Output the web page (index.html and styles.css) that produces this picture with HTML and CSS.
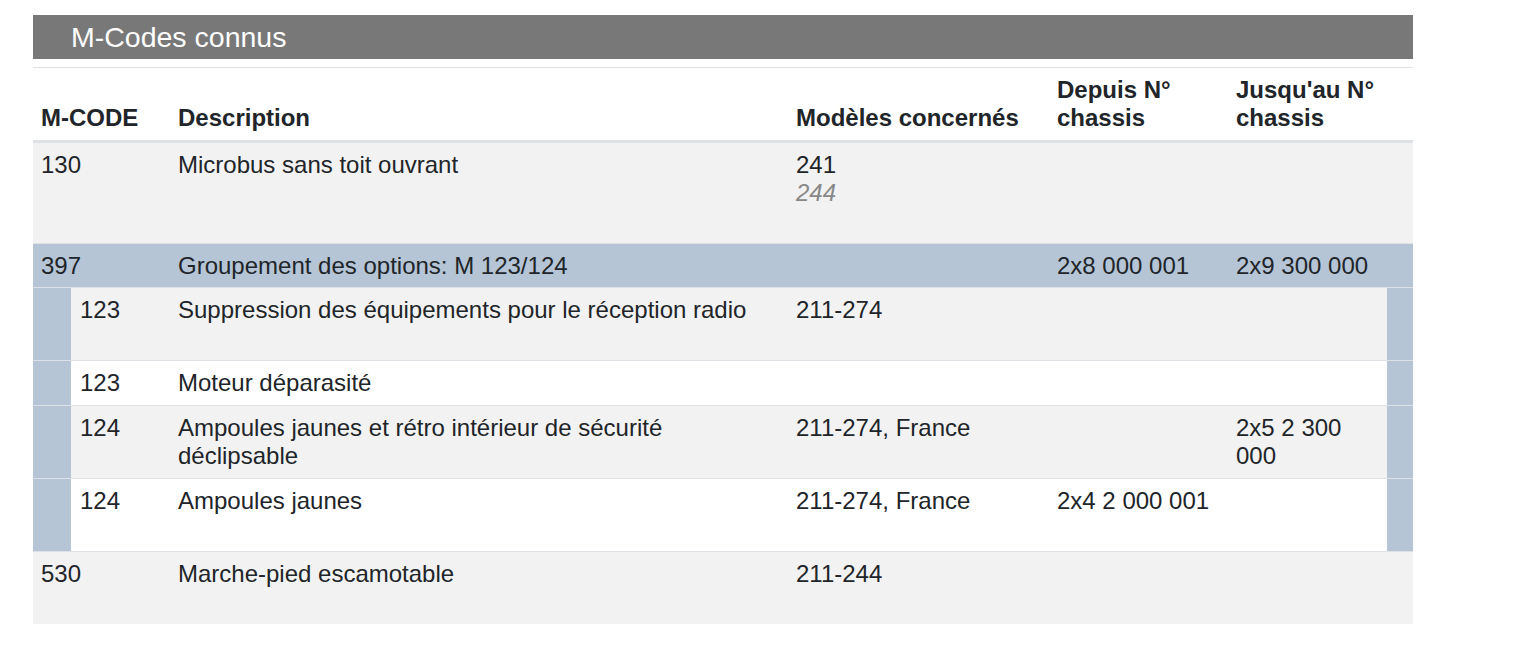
FILE: index.html
```html
<!DOCTYPE html>
<html lang="fr">
<head>
<meta charset="utf-8">
<title>M-Codes connus</title>
<link rel="stylesheet" href="styles.css">
</head>
<body>
<div class="page">
  <h2 class="title">M-Codes connus</h2>
  <div class="table">
    <div class="row head">
      <div class="cell code">M-CODE</div>
      <div class="cell">Description</div>
      <div class="cell">Modèles concernés</div>
      <div class="cell">Depuis N° chassis</div>
      <div class="cell last">Jusqu'au N° chassis</div>
    </div>
    <div class="row stripe">
      <div class="cell code">130</div>
      <div class="cell">Microbus sans toit ouvrant</div>
      <div class="cell models"><div>241</div><div class="alt">244</div></div>
      <div class="cell"></div>
      <div class="cell last"></div>
    </div>
    <div class="row group">
      <div class="cell code">397</div>
      <div class="cell">Groupement des options: M 123/124</div>
      <div class="cell"></div>
      <div class="cell">2x8 000 001</div>
      <div class="cell last">2x9 300 000</div>
    </div>
    <div class="row sub stripe">
      <div class="strip"></div>
      <div class="cell subcode">123</div>
      <div class="cell">Suppression des équipements pour le réception radio</div>
      <div class="cell models"><div>211-274</div></div>
      <div class="cell"></div>
      <div class="cell"></div>
      <div class="strip"></div>
    </div>
    <div class="row sub">
      <div class="strip"></div>
      <div class="cell subcode">123</div>
      <div class="cell">Moteur déparasité</div>
      <div class="cell"></div>
      <div class="cell"></div>
      <div class="cell"></div>
      <div class="strip"></div>
    </div>
    <div class="row sub stripe">
      <div class="strip"></div>
      <div class="cell subcode">124</div>
      <div class="cell">Ampoules jaunes et rétro intérieur de sécurité déclipsable</div>
      <div class="cell"><div>211-274, France</div></div>
      <div class="cell"></div>
      <div class="cell">2x5 2 300 000</div>
      <div class="strip"></div>
    </div>
    <div class="row sub">
      <div class="strip"></div>
      <div class="cell subcode">124</div>
      <div class="cell">Ampoules jaunes</div>
      <div class="cell models"><div>211-274, France</div></div>
      <div class="cell">2x4 2 000 001</div>
      <div class="cell"></div>
      <div class="strip"></div>
    </div>
    <div class="row stripe">
      <div class="cell code">530</div>
      <div class="cell">Marche-pied escamotable</div>
      <div class="cell models"><div>211-244</div></div>
      <div class="cell"></div>
      <div class="cell last"></div>
    </div>
  </div>
</div>
</body>
</html>
```
FILE: styles.css
```css
html, body {
  margin: 0;
  padding: 0;
  background: #fff;
}
body {
  font-family: "Liberation Sans", Arial, sans-serif;
  color: #212529;
  font-size: 24px;
  line-height: 28px;
}
.page {
  width: 1380px;
  padding: 15px 0 0 33px;
}
.title {
  margin: 0;
  height: 44px;
  line-height: 44px;
  background: #787878;
  color: #fff;
  font-size: 28.5px;
  font-weight: normal;
  padding-left: 38px;
}
.table {
  margin-top: 8px;
}
.row {
  display: grid;
  grid-template-columns: 38px 99px 618px 261px 179px 159px 26px;
  border-top: 1px solid #dee2e6;
}
.row.head {
  font-weight: bold;
  border-bottom: 3px solid #dee2e6;
}
.row.head + .row {
  border-top: 0;
}
.head .cell {
  align-self: end;
}
.cell {
  padding: 8px;
}
.group .cell {
  padding-bottom: 7px;
}
.code {
  grid-column: 1 / span 2;
}
.last {
  grid-column: 6 / span 2;
}
.subcode {
  padding-left: 9px;
}
.stripe {
  background: #f2f2f2;
}
.group {
  background: #b5c5d6;
}
.strip {
  background: #b5c5d6;
}
.models::after {
  content: "";
  display: block;
  height: 28px;
}
.alt {
  color: #888;
  font-style: italic;
}
```
